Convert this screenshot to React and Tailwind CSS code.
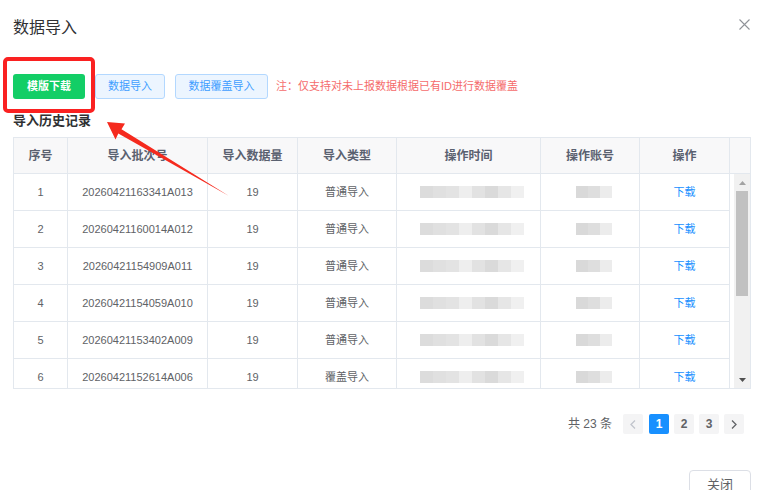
import React from "react";

const FONT = { fontFamily: '"Liberation Sans", "Noto Sans CJK SC", sans-serif' };

const rows = [
  { n: 1, id: "20260421163341A013", type: "普通导入" },
  { n: 2, id: "20260421160014A012", type: "普通导入" },
  { n: 3, id: "20260421154909A011", type: "普通导入" },
  { n: 4, id: "20260421154059A010", type: "普通导入" },
  { n: 5, id: "20260421153402A009", type: "普通导入" },
  { n: 6, id: "20260421152614A006", type: "覆盖导入" },
];

const timeShades = ["#dcdcdc", "#e0e0e0", "#e3e3e3", "#eeeeee", "#e2e2e2", "#dadada", "#e6e6e6", "#f0f0f0"];
const acctShades = ["#d9d9d9", "#dedede", "#ececec"];

function Blur({ shades, seg }) {
  return (
    <div className="flex h-[12px] blur-[0.6px]">
      {shades.map((c, i) => (
        <div key={i} className="h-full" style={{ width: seg, background: c }} />
      ))}
    </div>
  );
}

const cols = [
  { w: "w-[54px]", h: "序号" },
  { w: "w-[140px]", h: "导入批次号" },
  { w: "w-[90px]", h: "导入数据量" },
  { w: "w-[99px]", h: "导入类型" },
  { w: "w-[144px]", h: "操作时间" },
  { w: "w-[99px]", h: "操作账号" },
  { w: "w-[90px]", h: "操作" },
];

export default function App() {
  return (
    <div className="relative w-[759px] h-[490px] overflow-hidden bg-white" style={FONT}>
      <div className="pl-[13px] pr-[8px]">
        {/* Title */}
        <div className="flex items-center justify-between pt-[16px] h-[40px]">
          <div className="text-[16px] leading-[24px] text-[#303133]">数据导入</div>
          <svg width="11" height="11" viewBox="0 0 11 11" className="mr-[1px] -mt-[8px]">
            <path d="M0.5 0.5 L10.5 10.5 M10.5 0.5 L0.5 10.5" stroke="#909399" strokeWidth="1.1" />
          </svg>
        </div>

        {/* Buttons */}
        <div className="flex items-center mt-[34px] h-[25px]">
          <button className="w-[72px] h-[25px] rounded-[3px] bg-[#13ce66] text-white text-[11px] font-bold">
            模版下载
          </button>
          <button className="ml-[10px] w-[70px] h-[25px] rounded-[3px] bg-[#ecf5ff] border border-[#b3d8ff] text-[#409eff] text-[11px]">
            数据导入
          </button>
          <button className="ml-[10px] w-[93px] h-[25px] rounded-[3px] bg-[#ecf5ff] border border-[#b3d8ff] text-[#409eff] text-[11px]">
            数据覆盖导入
          </button>
          <span className="ml-[8px] text-[11px] text-[#f56c6c]">注：仅支持对未上报数据根据已有ID进行数据覆盖</span>
        </div>

        <div className="mt-[12px] text-[13px] leading-[20px] font-bold text-[#303133]">导入历史记录</div>

        {/* Table */}
        <div className="mt-[6px] border border-[#e3e8ee]">
          <div className="flex h-[36px] bg-[#f8f8f9] border-b border-[#e3e8ee]">
            {cols.map((c) => (
              <div
                key={c.h}
                className={`${c.w} shrink-0 border-r border-[#e3e8ee] flex items-center justify-center text-[12px] font-semibold text-[#5a6170]`}
              >
                {c.h}
              </div>
            ))}
            <div className="flex-1" />
          </div>
          <div className="flex h-[214px] overflow-hidden">
            <div className="w-[716px] shrink-0">
              {rows.map((r) => (
                <div key={r.n} className="flex h-[37px] border-b border-[#e3e8ee] text-[11px] text-[#606266]">
                  <div className="w-[54px] shrink-0 border-r border-[#e3e8ee] flex items-center justify-center">{r.n}</div>
                  <div className="w-[140px] shrink-0 border-r border-[#e3e8ee] flex items-center justify-center">{r.id}</div>
                  <div className="w-[90px] shrink-0 border-r border-[#e3e8ee] flex items-center justify-center">19</div>
                  <div className="w-[99px] shrink-0 border-r border-[#e3e8ee] flex items-center justify-center">{r.type}</div>
                  <div className="w-[144px] shrink-0 border-r border-[#e3e8ee] flex items-center justify-center pl-[6px]">
                    <Blur shades={timeShades} seg={13} />
                  </div>
                  <div className="w-[99px] shrink-0 border-r border-[#e3e8ee] flex items-center justify-center pl-[8px]">
                    <Blur shades={acctShades} seg={12} />
                  </div>
                  <div className="w-[90px] shrink-0 border-r border-[#e3e8ee] flex items-center justify-center text-[#1890ff]">
                    下载
                  </div>
                </div>
              ))}
            </div>
            <div className="flex-1 pl-[4px]">
              <div className="w-[16px] h-full bg-[#f1f1f1] flex flex-col">
                <div className="h-[17px] flex items-center justify-center">
                  <svg width="7" height="4" viewBox="0 0 7 4"><path d="M0 4 L3.5 0 L7 4 Z" fill="#a3a3a3" /></svg>
                </div>
                <div className="mx-[2px] h-[105px] bg-[#c1c1c1]" />
                <div className="flex-1" />
                <div className="h-[17px] flex items-center justify-center">
                  <svg width="7" height="4" viewBox="0 0 7 4"><path d="M0 0 L7 0 L3.5 4 Z" fill="#505050" /></svg>
                </div>
              </div>
            </div>
          </div>
        </div>

        {/* Pagination */}
        <div className="flex items-center justify-end mt-[25px] mr-[7px] h-[20px]">
          <span className="text-[12px] text-[#606266] mr-[11px]">共 23 条</span>
          <div className="w-[20px] h-[20px] rounded-[2px] bg-[#f4f4f5] flex items-center justify-center">
            <svg width="6" height="9" viewBox="0 0 6 9"><path d="M5 0.5 L1 4.5 L5 8.5" stroke="#c0c4cc" strokeWidth="1.3" fill="none" /></svg>
          </div>
          <div className="ml-[6px] w-[20px] h-[20px] rounded-[2px] bg-[#1890ff] text-white text-[12px] font-bold flex items-center justify-center">1</div>
          <div className="ml-[5px] w-[20px] h-[20px] rounded-[2px] bg-[#f4f4f5] text-[#606266] text-[12px] font-bold flex items-center justify-center">2</div>
          <div className="ml-[5px] w-[20px] h-[20px] rounded-[2px] bg-[#f4f4f5] text-[#606266] text-[12px] font-bold flex items-center justify-center">3</div>
          <div className="ml-[5px] w-[20px] h-[20px] rounded-[2px] bg-[#f4f4f5] flex items-center justify-center">
            <svg width="6" height="9" viewBox="0 0 6 9"><path d="M1 0.5 L5 4.5 L1 8.5" stroke="#606266" strokeWidth="1.3" fill="none" /></svg>
          </div>
        </div>

        {/* Footer */}
        <div className="flex justify-end mt-[36px]">
          <button className="w-[62px] h-[30px] rounded-[4px] border border-[#dcdfe6] text-[13px] text-[#606266] bg-white">
            关闭
          </button>
        </div>
      </div>

      {/* Annotations */}
      <div className="absolute left-[3px] top-[57px] w-[92px] h-[56px] border-[4px] border-[#fa2121] rounded-[5px]" />
      <svg className="absolute left-0 top-0 pointer-events-none" width="759" height="490">
        <polygon points="107,122 125,123.5 121.5,129.2 229,196 118.3,133.6 115.5,139.5" fill="#f52a1e" />
      </svg>
    </div>
  );
}
